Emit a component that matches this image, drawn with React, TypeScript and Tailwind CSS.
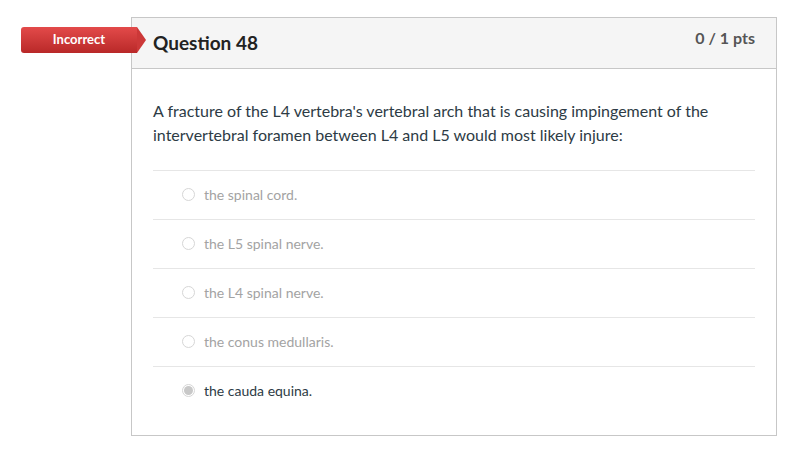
import React from "react";

const answers = [
  { t: "the spinal cord.", sel: false },
  { t: "the L5 spinal nerve.", sel: false },
  { t: "the L4 spinal nerve.", sel: false },
  { t: "the conus medullaris.", sel: false },
  { t: "the cauda equina.", sel: true },
];

export default function App() {
  return (
    <div className="w-[792px] h-[452px] bg-white relative" style={{ fontFamily: "Lato, 'Open Sans', sans-serif" }}>
      <div className="pt-[17px] pl-[131px]">
        <div className="w-[646px] h-[419px] border border-[#c7c7c7] relative">
          <div className="h-[51px] bg-[#f5f5f5] border-b border-[#c7c7c7] flex justify-between pl-[21px] pr-[21px]">
            <div className="text-[19px] font-bold text-[#222] pt-[12px] leading-[26px]">Question 48</div>
            <div className="text-[16px] font-bold text-[#555] pt-[8px] leading-[24px]">0 / 1 pts</div>
          </div>
          <div className="px-[21px] pt-[30px]">
            <p className="text-[16px] leading-[24px] text-[#2d3b45]">
              A fracture of the L4 vertebra's vertebral arch that is causing impingement of the intervertebral foramen between L4 and L5 would most likely injure:
            </p>
            <div className="mt-[23px]">
              {answers.map((a, i) => (
                <div key={i} className="h-[49px] border-t border-[#e6e6e6] flex items-center pl-[29px] pb-[2px]">
                  <span className="w-[13px] h-[13px] rounded-full border border-[#d6d6d6] bg-white flex items-center justify-center">
                    {a.sel && <span className="w-[9px] h-[9px] rounded-full bg-[#c8c8c8]" />}
                  </span>
                  <span className={"ml-[9px] text-[14px] " + (a.sel ? "text-[#2d3b45]" : "text-[#a3a3a3]")}>{a.t}</span>
                </div>
              ))}
            </div>
          </div>
        </div>
      </div>
      <div className="absolute left-[21px] top-[27px] h-[26px] w-[116px] rounded-l-[3px] bg-gradient-to-b from-[#e34a4a] to-[#b92828] flex items-center justify-center">
        <span className="text-white text-[13px] font-bold">Incorrect</span>
        <span className="absolute left-[116px] top-0 w-0 h-0 border-t-[13px] border-b-[13px] border-l-[9px] border-t-transparent border-b-transparent border-l-[#cc3838]" />
      </div>
    </div>
  );
}
